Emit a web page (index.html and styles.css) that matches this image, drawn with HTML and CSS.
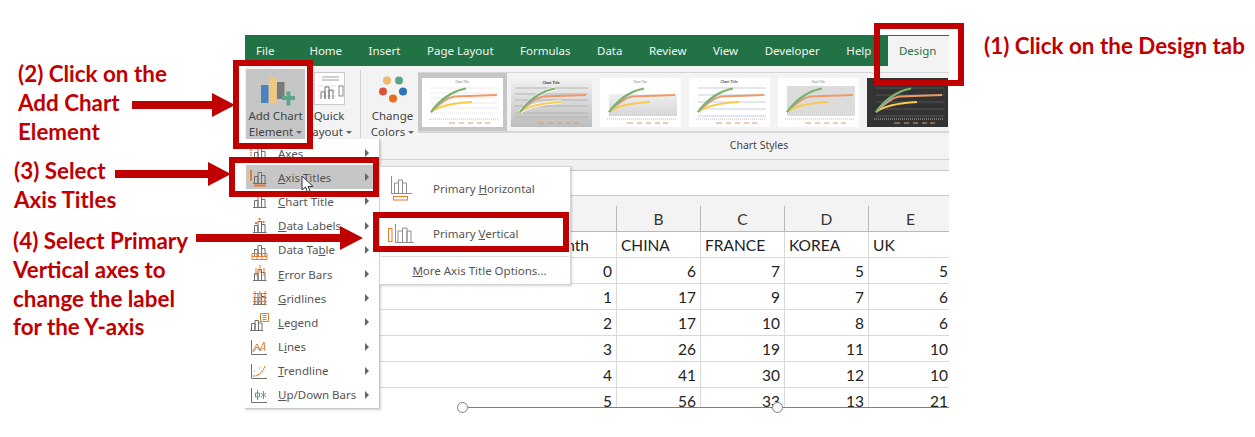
FILE: index.html
```html
<!DOCTYPE html>
<html lang="en">
<head>
<meta charset="utf-8">
<title>Add Chart Element</title>
<link rel="stylesheet" href="styles.css">
</head>
<body>
<svg class="defs" width="0" height="0" aria-hidden="true">
  <defs>
    <linearGradient id="silver" x1="0" y1="0" x2="0" y2="1">
      <stop offset="0" stop-color="#f2f2f2"/>
      <stop offset="1" stop-color="#bdbdbd"/>
    </linearGradient>
    <linearGradient id="plotfade" x1="0" y1="0" x2="0" y2="1">
      <stop offset="0" stop-color="#f6f6f6"/>
      <stop offset="1" stop-color="#d6d6d6"/>
    </linearGradient>
    <symbol id="bars" viewBox="0 0 24 20">
      <path class="g" d="M6.5 16V9.5h3.5V16M10 16V5.500h3.500V16M13.500 16V8.500h3.500V16M5 16.500h13.500"/>
    </symbol>
    <symbol id="lines" viewBox="0 0 81 49">
      <path class="s-a" d="M7 41h70"/>
      <path class="s-o" d="M9 34C17 26 24 20 32 18.500L75 17"/>
      <path class="s-y" d="M9 34C17 28 30 25 50 24"/>
      <path class="s-b" d="M9 34C16 26 24 18 35 13"/>
      <path class="s-g" d="M9 34C16 24 26 14 44 10.500"/>
      <path class="s-l" d="M27 45h6M37 45h5M46 45h5M55 45h5M63 45h5"/>
    </symbol>
  </defs>
</svg>

<main class="stage">
  <section class="window">
    <nav class="tabs">
      <span class="tab tab-file">File</span>
      <span class="tab">Home</span>
      <span class="tab">Insert</span>
      <span class="tab">Page Layout</span>
      <span class="tab">Formulas</span>
      <span class="tab">Data</span>
      <span class="tab">Review</span>
      <span class="tab">View</span>
      <span class="tab">Developer</span>
      <span class="tab">Help</span>
      <span class="tab tab-active">Design</span>
    </nav>

    <div class="ribbon">
      <div class="rb rb-add">
        <svg class="rb-icon" width="34" height="32" viewBox="0 0 34 32">
          <rect x="0" y="10" width="7.500" height="18" fill="#4b84bd"/>
          <rect x="8" y="2" width="7.500" height="26" fill="#f0c77d"/>
          <rect x="16" y="7" width="7.500" height="17" fill="#7a7a7a"/>
          <path d="M21 21h4.500v-4.500h4v4.500h4.500v4h-4.500v5.500h-4v-5.500H21z" fill="#5fa58c"/>
        </svg>
        <span class="rb-label">Add Chart<br>Element <i class="caret"></i></span>
      </div>
      <div class="rb rb-quick">
        <svg class="rb-icon" width="31" height="33" viewBox="0 0 31 33">
          <rect x=".5" y=".5" width="30" height="32" fill="#fff" stroke="#c9c9c9"/>
          <path d="M8 5h17M8 8h17" stroke="#a0a0a0"/>
          <path d="M4 14h18M4 19h18M4 24h18" stroke="#ddd"/>
          <path d="M7 27v-7h4v7M11 27v-12h4v12M15 27v-9h4v9" fill="none" stroke="#777"/>
          <rect x="25" y="14" width="4" height="10" fill="none" stroke="#888"/>
        </svg>
        <span class="rb-label">Quick<br>Layout <i class="caret"></i></span>
      </div>
      <div class="rb-sep"></div>
      <div class="rb rb-colors">
        <svg class="rb-icon" width="32" height="32" viewBox="0 0 32 32">
          <circle cx="10" cy="5" r="4" fill="#efb96a"/>
          <circle cx="22" cy="5" r="4" fill="#5ca58b"/>
          <circle cx="6" cy="16" r="4" fill="#d9543a"/>
          <circle cx="26" cy="16" r="4" fill="#2f75b5"/>
          <circle cx="16" cy="23" r="4" fill="#e56f1f"/>
        </svg>
        <span class="rb-label">Change<br>Colors <i class="caret"></i></span>
      </div>

      <div class="styles">
        <div class="gallery">
          <div class="cell cell-on">
            <svg class="thumb" width="81" height="49" viewBox="0 0 81 49">
              <rect class="bg-w" width="81" height="49"/>
              <path class="grid" d="M8 10h68M8 15h68M8 20h68M8 25h68M8 30h68M8 35h68"/>
              <text class="tt" x="40" y="5">Chart Title</text>
              <use href="#lines"/>
            </svg>
          </div>
          <div class="cell">
            <svg class="thumb" width="81" height="49" viewBox="0 0 81 49">
              <rect class="bg-g" width="81" height="49"/>
              <path class="grid-d" d="M4 10h73M4 16h73M4 22h73M4 28h73M4 35h73M4 39h73"/>
              <text class="tt tt-b" x="40" y="6">Chart Title</text>
              <path class="halo" d="M9 34C17 24 26 14 44 10.500M9 34C17 28 30 25 50 24"/>
              <use href="#lines"/>
            </svg>
          </div>
          <div class="cell">
            <svg class="thumb" width="81" height="49" viewBox="0 0 81 49">
              <rect class="bg-w" width="81" height="49"/>
              <path class="plot-g" d="M9 16H77V38H9zM44 10.500l-1 6h2z"/>
              <text class="tt" x="40" y="5">Chart Title</text>
              <use href="#lines"/>
            </svg>
          </div>
          <div class="cell">
            <svg class="thumb" width="81" height="49" viewBox="0 0 81 49">
              <rect class="bg-w" width="81" height="49"/>
              <path class="grid-b" d="M9 10h68M9 17h68M9 24h68M9 31h68M9 38h68"/>
              <text class="tt tt-n" x="40" y="5">Chart Title</text>
              <use href="#lines"/>
            </svg>
          </div>
          <div class="cell">
            <svg class="thumb" width="81" height="49" viewBox="0 0 81 49">
              <rect class="bg-w" width="81" height="49"/>
              <rect class="plot-h" x="9" y="8" width="68" height="30"/>
              <text class="tt" x="40" y="5">Chart Title</text>
              <use href="#lines"/>
            </svg>
          </div>
          <div class="cell">
            <svg class="thumb" width="81" height="49" viewBox="0 0 81 49">
              <rect class="bg-d" width="81" height="49"/>
              <path class="grid-k" d="M9 10h68M9 17h68M9 24h68M9 31h68M9 38h68"/>
              <text class="tt tt-w" x="40" y="5">Chart Title</text>
              <use href="#lines"/>
            </svg>
          </div>
        </div>
        <div class="group-name">Chart Styles</div>
      </div>
    </div>

    <div class="strip"></div>
    <div class="formula"></div>
    <div class="strip-2"></div>

    <div class="sheet">
      <div class="c h"></div><div class="c h"></div><div class="c h">B</div><div class="c h">C</div><div class="c h">D</div><div class="c h">E</div>

      <div class="c rh"></div><div class="c n month">Month</div><div class="c">CHINA</div><div class="c">FRANCE</div><div class="c">KOREA</div><div class="c">UK</div>
      <div class="c rh"></div><div class="c n">0</div><div class="c n">6</div><div class="c n">7</div><div class="c n">5</div><div class="c n">5</div>
      <div class="c rh"></div><div class="c n">1</div><div class="c n">17</div><div class="c n">9</div><div class="c n">7</div><div class="c n">6</div>
      <div class="c rh"></div><div class="c n">2</div><div class="c n">17</div><div class="c n">10</div><div class="c n">8</div><div class="c n">6</div>
      <div class="c rh"></div><div class="c n">3</div><div class="c n">26</div><div class="c n">19</div><div class="c n">11</div><div class="c n">10</div>
      <div class="c rh"></div><div class="c n">4</div><div class="c n">41</div><div class="c n">30</div><div class="c n">12</div><div class="c n">10</div>
      <div class="c rh"></div><div class="c n">5</div><div class="c n">56</div><div class="c n">33</div><div class="c n">13</div><div class="c n">21</div>
    </div>
  </section>

  <div class="sel-line"></div>
  <div class="handle handle-a"></div>
  <div class="handle handle-b"></div>

  <ul class="menu">
    <li class="mi">
      <svg class="mi-icon" width="24" height="20" viewBox="0 0 24 20"><use href="#bars"/><path class="o-d" d="M3 4v13"/></svg>
      <span class="mi-text">Axes</span><i class="chev"></i>
    </li>
    <li class="mi mi-on">
      <svg class="mi-icon" width="24" height="20" viewBox="0 0 24 20"><use href="#bars"/><path class="o-t" d="M3 3v11M6 18.500h12"/></svg>
      <span class="mi-text"><u>A</u>xis Titles</span><i class="chev"></i>
    </li>
    <li class="mi">
      <svg class="mi-icon" width="24" height="20" viewBox="0 0 24 20"><use href="#bars"/></svg>
      <span class="mi-text"><u>C</u>hart Title</span><i class="chev"></i>
    </li>
    <li class="mi">
      <svg class="mi-icon" width="24" height="20" viewBox="0 0 24 20"><use href="#bars"/><path class="o-t" d="M8 6v2M11.500 2v2M15.500 5v2"/></svg>
      <span class="mi-text"><u>D</u>ata Labels</span><i class="chev"></i>
    </li>
    <li class="mi">
      <svg class="mi-icon" width="24" height="20" viewBox="0 0 24 20"><use href="#bars"/><path class="o" d="M4 13.500h15v6H4zM4 16.500h15M9 13.500v6M14 13.500v6"/></svg>
      <span class="mi-text">Data Ta<u>b</u>le</span><i class="chev"></i>
    </li>
    <li class="mi">
      <svg class="mi-icon" width="24" height="20" viewBox="0 0 24 20"><use href="#bars"/><path class="o" d="M8 4v8M12 1v8M16 4v8"/></svg>
      <span class="mi-text"><u>E</u>rror Bars</span><i class="chev"></i>
    </li>
    <li class="mi">
      <svg class="mi-icon" width="24" height="20" viewBox="0 0 24 20"><use href="#bars"/><path class="o" d="M5 5.500h14M5 9.500h14M5 13.500h14M7 3v14M12 3v14M17 3v14"/></svg>
      <span class="mi-text"><u>G</u>ridlines</span><i class="chev"></i>
    </li>
    <li class="mi">
      <svg class="mi-icon" width="24" height="20" viewBox="0 0 24 20"><path class="g" d="M3.500 18v-6.500h3.500V18M7 18V8.500h3.500V18M10.500 18v-7h3.500V18M2 18.500h13"/><path class="o" d="M12.500 1.500h8v8h-8z"/><path class="o" d="M14.500 3.500h4M14.500 5.500h4M14.500 7.500h4"/></svg>
      <span class="mi-text"><u>L</u>egend</span><i class="chev"></i>
    </li>
    <li class="mi">
      <svg class="mi-icon" width="24" height="20" viewBox="0 0 24 20"><path class="g" d="M3.500 3v14.500H19"/><path class="o" d="M5 14l4-7 3 6 4-8 1 9"/><path class="g-l" d="M5 15l4-5 3 4 5-4"/></svg>
      <span class="mi-text">L<u>i</u>nes</span><i class="chev"></i>
    </li>
    <li class="mi">
      <svg class="mi-icon" width="24" height="20" viewBox="0 0 24 20"><path class="g" d="M3.500 3v14.500H19"/><path class="o-d" d="M5 15c6 0 10-4 12-10"/><path class="g-l" d="M6 10h1M11 7h1M9 14h1"/></svg>
      <span class="mi-text"><u>T</u>rendline</span><i class="chev"></i>
    </li>
    <li class="mi">
      <svg class="mi-icon" width="24" height="20" viewBox="0 0 24 20"><path class="g" d="M3.500 3v14.500H19"/><path class="gr" d="M9.500 5v10M7.500 8h4v4h-4z"/><path class="g-l" d="M15.500 6v8M13 8l5 4M18 8l-5 4"/></svg>
      <span class="mi-text"><u>U</u>p/Down Bars</span><i class="chev"></i>
    </li>
  </ul>

  <div class="submenu">
    <div class="si si-first">
      <svg class="si-icon" width="26" height="26" viewBox="0 0 26 26">
        <path class="g-l" d="M3.500 1v17M6.500 18V8h4v10M10.500 18V5h4v13M14.500 18V8h4v10M3 18.500h21"/>
        <rect class="o" x="5.500" y="21.500" width="14" height="3.500"/>
      </svg>
      <span>Primary <u>H</u>orizontal</span>
    </div>
    <div class="si">
      <svg class="si-icon" width="26" height="26" viewBox="0 0 26 26">
        <rect class="o" x=".5" y="7.500" width="3.500" height="13"/>
        <path class="g-l" d="M7.500 3v19M10 21V10h4.500v11M14.500 21V7H19v14M19 21V10h4v11M7 21.500h19"/>
      </svg>
      <span>Primary <u>V</u>ertical</span>
    </div>
    <div class="si-more"><u>M</u>ore Axis Title Options...</div>
  </div>

  <svg class="cursor" width="14" height="19" viewBox="0 0 14 19">
    <path d="M1 1v14l3.500-3 2.500 6 2.500-1-2.500-5.500H12z" fill="#fff" stroke="#333"/>
  </svg>

  <div class="box box-design"></div>
  <div class="box box-add"></div>
  <div class="box box-axis"></div>
  <div class="box box-vert"></div>

  <div class="arrow arrow-2"><i class="shaft"></i><i class="head"></i></div>
  <div class="arrow arrow-3"><i class="shaft"></i><i class="head"></i></div>
  <div class="arrow arrow-4"><i class="shaft"></i><i class="head"></i></div>

  <p class="note note-1">(1) Click on the Design tab</p>
  <p class="note note-2">(2) Click on the<br>Add Chart<br>Element</p>
  <p class="note note-3">(3) Select<br>Axis Titles</p>
  <p class="note note-4">(4) Select Primary<br>Vertical axes to<br>change the label<br>for the Y-axis</p>
</main>
</body>
</html>
```

FILE: styles.css
```css
* { box-sizing: border-box; }
html, body { margin: 0; padding: 0; background: #fff; }
body { overflow: hidden; }
.defs { position: absolute; }

.stage {
  position: relative;
  width: 1255px;
  height: 437px;
  padding: 35px 0 0 245px;
  overflow: hidden;
  font-family: "Noto Sans", "Open Sans", sans-serif;
}

/* Excel window */
.window {
  width: 704px;
  height: 373px;
  overflow: hidden;
  background: #fff;
  display: flex;
  flex-direction: column;
}
.tabs {
  display: flex;
  gap: 26.500px;
  align-items: center;
  height: 31px;
  flex: none;
  background: #217346;
  color: #f2f2f2;
  font-size: 11.5px;
  padding-left: 11px;
}
.tab { flex: none; white-space: nowrap; }
.tab-file { margin-right: 8.500px; }
.tab-active {
  align-self: flex-end;
  height: 30px;
  line-height: 30px;
  width: 61px;
  margin-left: -10px;
  padding-left: 11px;
  background: #f3f3f3;
  color: #217346;
}

.ribbon {
  display: flex;
  height: 94px;
  flex: none;
  background: #f3f3f3;
  border-bottom: 1px solid #d2d2d2;
}
.rb {
  display: flex;
  flex-direction: column;
  align-items: center;
  flex: none;
}
.rb-label {
  font-size: 11.5px;
  line-height: 16px;
  color: #444;
  text-align: center;
  white-space: nowrap;
}
.rb-add {
  width: 59px;
  margin: 3px 0 16px 1px;
  padding-top: 6px;
  background: #c6c6c6;
}
.rb-add .rb-icon { margin: 0 0 1px 4px; height: 32px; }
.rb-quick { width: 52px; margin-left: -2px; padding-top: 6px; }
.rb-quick .rb-icon { margin-bottom: 3px; }
.rb-sep { width: 1px; height: 68px; margin: 4px 0 0 5px; background: #d0d0d0; flex: none; }
.rb-colors { width: 57px; padding: 9px 0 0 6px; }
.rb-colors .rb-icon { margin-bottom: 0; height: 33px; }

.caret {
  display: inline-block;
  width: 0;
  height: 0;
  border: 3px solid transparent;
  border-top: 3px solid #666;
  border-bottom: 0;
  vertical-align: 2px;
}

.styles { flex: 1; min-width: 0; }
.gallery {
  display: flex;
  height: 61px;
  margin-top: 6px;
  border-top: 1px solid #d6d6d6;
  border-bottom: 2px solid #d6d6d6;
  overflow: hidden;
}
.cell {
  flex: none;
  width: 89px;
  padding: 5px 4px 0;
}
.cell-on { background: #c6c6c6; }
.thumb { display: block; }

.group-name {
  height: 26px;
  line-height: 25px;
  padding-left: 151px;
  text-align: center;
  font-size: 10.5px;
  color: #444;
}

.bg-w { fill: #fff; }
.bg-g { fill: url(#silver); }
.bg-d { fill: #333; }
.grid, .grid-d, .grid-b, .grid-k { fill: none; stroke-width: 1; }
.grid { stroke: #ececec; }
.grid-d { stroke: #b4b4b4; }
.grid-b { stroke: #e2e8f2; stroke-width: 2; }
.grid-k { stroke: #555; }
.plot-g { fill: url(#plotfade); }
.plot-h { fill: #dcdcdc; }
.halo { fill: none; stroke: #fff; stroke-width: 3.500; }
.tt { font-family: "Liberation Sans", sans-serif; font-size: 3px; fill: #777; text-anchor: middle; }
.tt-b { font-weight: 700; font-size: 3.500px; fill: #333; }
.tt-n { font-weight: 700; font-size: 3.500px; fill: #44546a; }
.tt-w { fill: #ccc; }

.s-o, .s-y, .s-b, .s-g { fill: none; stroke-width: 1.800; }
.s-a { fill: none; stroke: #bbb; stroke-width: 1; stroke-dasharray: 1 1; }
.s-o { stroke: #ed9a66; }
.s-y { stroke: #f8cb4a; }
.s-b { stroke: #7aa5d6; }
.s-g { stroke: #7fb566; }
.s-l { fill: none; stroke: #d99a70; stroke-width: 1; }

.strip { height: 11px; flex: none; background: #f0f0f0; border-bottom: 1px solid #c8c8c8; }
.formula { height: 25px; flex: none; background: #fff; border-bottom: 1px solid #c8c8c8; }
.strip-2 { height: 10px; flex: none; background: #f3f3f3; }

.sheet {
  display: grid;
  grid-template-columns: 28px 344px repeat(4, 84px);
  grid-auto-rows: 26px;
  font-family: Lato, "Liberation Sans", sans-serif;
  font-size: 15.500px;
  color: #222;
}
.c {
  line-height: 26px;
  padding: 0 4px;
  border-right: 1px solid #d9d9d9;
  border-bottom: 1px solid #d9d9d9;
  white-space: nowrap;
  overflow: hidden;
}
.n { text-align: right; }
.month { padding-right: 27px; }
.h {
  background: #f3f3f3;
  border-color: #b8b8b8;
  text-align: center;
  color: #333;
}
.rh { background: #f3f3f3; border-color: #b8b8b8; }

.sel-line {
  position: absolute;
  left: 462px;
  top: 407px;
  width: 487px;
  height: 1px;
  background: #808080;
}
.handle {
  position: absolute;
  top: 402px;
  width: 11px;
  height: 11px;
  border: 1.500px solid #7f7f7f;
  border-radius: 50%;
  background: #fff;
}
.handle-a { left: 457px; }
.handle-b { left: 772px; }

/* Dropdown menus */
.menu {
  position: absolute;
  left: 245px;
  top: 139px;
  width: 135px;
  height: 270px;
  margin: 0;
  padding: 2px 3px 0 1px;
  list-style: none;
  background: #fff;
  border-right: 1px solid #c8c8c8;
  border-bottom: 1px solid #c8c8c8;
  box-shadow: 1px 1px 2px rgba(0, 0, 0, .18);
  font-size: 11.500px;
  color: #555;
}
.mi {
  display: flex;
  align-items: center;
  height: 24.200px;
  padding-left: 2px;
}
.mi-on { background: #c6c6c6; }
.mi-icon { flex: none; margin-right: 6px; }
.mi-text { flex: 1; white-space: nowrap; }
.chev {
  flex: none;
  width: 0;
  height: 0;
  margin-right: 7px;
  border-left: 4px solid #666;
  border-top: 4px solid transparent;
  border-bottom: 4px solid transparent;
}
.g, .g-l, .o, .o-t, .o-d, .gr { fill: none; stroke-width: 1; }
.g { stroke: #6f6f6f; }
.g-l { stroke: #8f8f8f; }
.o { stroke: #e97b2d; }
.o-t { stroke: #e97b2d; stroke-width: 2; }
.o-d { stroke: #e97b2d; stroke-dasharray: 1.500 1; stroke-width: 1.500; }
.gr { stroke: #5ca58b; }

.submenu {
  position: absolute;
  left: 379px;
  top: 166px;
  width: 192px;
  height: 119px;
  background: #fff;
  border: 1px solid #d4d4d4;
  box-shadow: 1px 1px 2px rgba(0, 0, 0, .18);
  font-size: 11.500px;
  color: #555;
}
.si {
  display: flex;
  align-items: center;
  height: 44.500px;
  padding-left: 8px;
}
.si-first { padding-bottom: 2px; }
.si-icon { flex: none; margin-right: 19px; }
.si-more {
  height: 28px;
  line-height: 27px;
  border-top: 1px solid #dcdcdc;
  text-align: center;
  margin: 0 1px;
  padding-left: 9px;
}

.cursor { position: absolute; left: 301px; top: 175px; }

/* Annotations */
.box {
  position: absolute;
  border: 6px solid #c00000;
}
.box-design { left: 874px; top: 23px; width: 90px; height: 63px; }
.box-add { left: 233px; top: 60px; width: 80px; height: 89px; }
.box-axis { left: 229px; top: 157px; width: 150px; height: 40px; }
.box-vert { left: 373px; top: 212px; width: 196px; height: 40px; }

.arrow { position: absolute; display: flex; align-items: center; }
.shaft { display: block; height: 8px; background: #c00000; }
.head {
  display: block;
  width: 0;
  height: 0;
  border-left: 23px solid #c00000;
  border-top: 12px solid transparent;
  border-bottom: 12px solid transparent;
}
.arrow-2 { left: 132px; top: 93px; }
.arrow-2 .shaft { width: 80px; }
.arrow-3 { left: 115px; top: 162px; }
.arrow-3 .shaft { width: 93px; }
.arrow-4 { left: 196px; top: 226px; }
.arrow-4 .shaft { width: 144px; }

.note {
  position: absolute;
  margin: 0;
  font-family: Lato, "Liberation Sans", sans-serif;
  font-weight: 700;
  font-size: 22.400px;
  line-height: 28.800px;
  color: #c00000;
  white-space: nowrap;
}
.note-1 { left: 984px; top: 32px; }
.note-2 { left: 18px; top: 60px; }
.note-3 { left: 14px; top: 157px; }
.note-4 { left: 13px; top: 227px; }
```
